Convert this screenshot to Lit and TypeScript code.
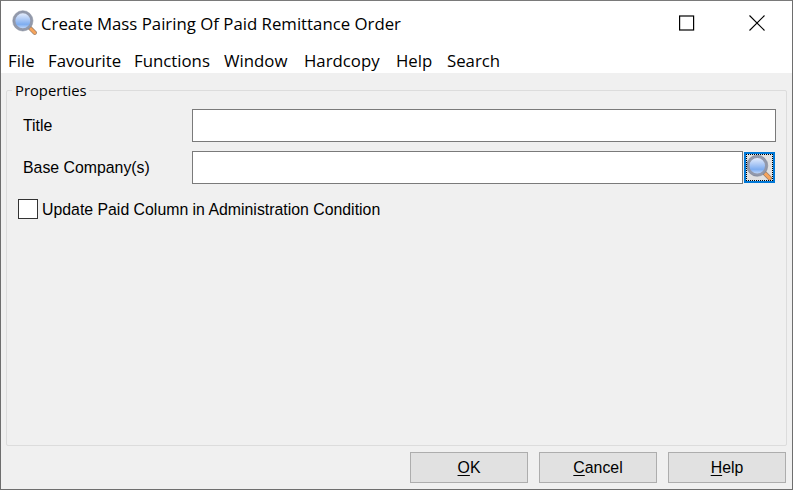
import { LitElement, html, css, svg } from "lit";
import { customElement } from "lit/decorators.js";

const lens = (size: number, id: string) => html`<svg class="lens" width=${size} height=${size} viewBox="0 0 24 24">
  <defs>
    <linearGradient id=${id} x1="0" y1="0" x2="0" y2="1">
      <stop offset="0" stop-color="#eef3fd"/><stop offset="0.38" stop-color="#b3cdf6"/><stop offset="0.7" stop-color="#7eadf0"/><stop offset="1" stop-color="#d5e4fb"/>
    </linearGradient>
  </defs>
  ${svg`<path d="M15.5 15.5 L21 21" stroke="#9a7f6a" stroke-width="4" stroke-linecap="round"/>
  <path d="M17 17 L21 21" stroke="#f6a45c" stroke-width="2.7" stroke-linecap="round"/>
  <circle cx="10" cy="10" r="8.1" fill=${`url(#${id})`} stroke="#9299ab" stroke-width="2.4"/>
  <circle cx="10" cy="10" r="9.4" fill="none" stroke="#6b7488" stroke-width="0.4"/>`}
</svg>`;

@customElement("app-root")
export class AppRoot extends LitElement {
  static styles = css`
    :host { display: block; width: 793px; height: 490px; box-sizing: border-box; border: 1px solid #6e6e6e; border-top-color: #7a7a7a; background: #f0f0f0; overflow: hidden; }
    .win { display: flex; flex-direction: column; height: 100%; }
    .title { height: 44px; background: #fff; display: flex; align-items: center; padding-left: 11px; flex: none; font: 16.8px "Open Sans", "Noto Sans", sans-serif; color: #000; }
    .title .lens { margin-right: 3px; flex: none; }
    .title .text { flex: 1; }
    .ctl { width: 70px; display: flex; justify-content: center; align-items: center; }
    .ctl svg { display: block; }
    .menu { height: 28px; background: #fff; display: grid; grid-template-columns: 26px 72px 76px 66px 78px 37px 52px; gap: 14px; padding-left: 7px; flex: none; align-items: center; font: 16.8px "Open Sans", "Noto Sans", sans-serif; color: #000; padding-top: 2px; box-sizing: border-box; white-space: nowrap; }
    .body { flex: 1; display: flex; flex-direction: column; padding: 0 5px 0 5px; font: 15.85px "Liberation Sans", Arial, sans-serif; color: #000; min-height: 0; }
    fieldset { flex: 1; margin: 7px 0 0; padding: 9px 10px 0 16px; border: 1px solid #dcdcdc; border-radius: 2px; min-width: 0; min-inline-size: 0; display: flex; flex-direction: column; }
    legend { padding: 0 2px 0 3px; margin-left: -11px; font: 14.8px "Open Sans", "Noto Sans", sans-serif; line-height: 20px; }
    .row { display: flex; align-items: center; height: 33px; margin-bottom: 9px; }
    .row label { width: 169px; flex: none; padding-top: 1px; }
    .row input { flex: 1; min-width: 0; height: 33px; box-sizing: border-box; border: 1px solid #7a7a7a; background: #fff; margin: 0; padding: 0; }
    .pick { width: 31px; height: 31px; box-sizing: border-box; flex: none; margin: 0 1px 0 1px; border: 2px solid #0078d7; outline: 1px dotted #000; outline-offset: -3px; background: #e1e1e1; padding: 0; display: flex; align-items: center; justify-content: center; }
    .check { display: flex; align-items: center; margin: 6px 0 0 -5px; }
    .check .txt { padding-top: 1px; }
    .box { width: 20px; height: 20px; box-sizing: border-box; border: 1px solid #333; background: #fff; margin-right: 4px; flex: none; }
    .foot { height: 43px; box-sizing: border-box; flex: none; display: flex; justify-content: flex-end; align-items: flex-start; gap: 11px; padding: 6px 1px 0 0; }
    button.b { width: 118px; height: 31px; box-sizing: border-box; background: #e1e1e1; border: 1px solid #adadad; font: 15.85px "Liberation Sans", Arial, sans-serif; color: #000; padding: 0; }
    u { text-decoration-thickness: 1px; text-underline-offset: 2px; }
  `;

  render() {
    return html`<div class="win">
      <div class="title">
        ${lens(26, "g1")}
        <span class="text">Create Mass Pairing Of Paid Remittance Order</span>
        <span class="ctl"><svg width="16" height="16" viewBox="0 0 16 16"><rect x="0.6" y="1" width="14" height="14" fill="none" stroke="#000" stroke-width="1.2"/></svg></span>
        <span class="ctl"><svg width="16" height="16" viewBox="0 0 16 16"><path d="M0.5 0.5 L15.5 15.5 M15.5 0.5 L0.5 15.5" stroke="#000" stroke-width="1.1"/></svg></span>
      </div>
      <div class="menu">
        ${["File", "Favourite", "Functions", "Window", "Hardcopy", "Help", "Search"].map((m) => html`<span>${m}</span>`)}
      </div>
      <div class="body">
        <fieldset>
          <legend>Properties</legend>
          <div class="row"><label>Title</label><input /></div>
          <div class="row"><label>Base Company(s)</label><input /><button class="pick">${lens(28, "g2")}</button></div>
          <div class="check"><span class="box"></span><span class="txt">Update Paid Column in Administration Condition</span></div>
        </fieldset>
        <div class="foot">
          <button class="b"><u>O</u>K</button>
          <button class="b"><u>C</u>ancel</button>
          <button class="b"><u>H</u>elp</button>
        </div>
      </div>
    </div>`;
  }
}
